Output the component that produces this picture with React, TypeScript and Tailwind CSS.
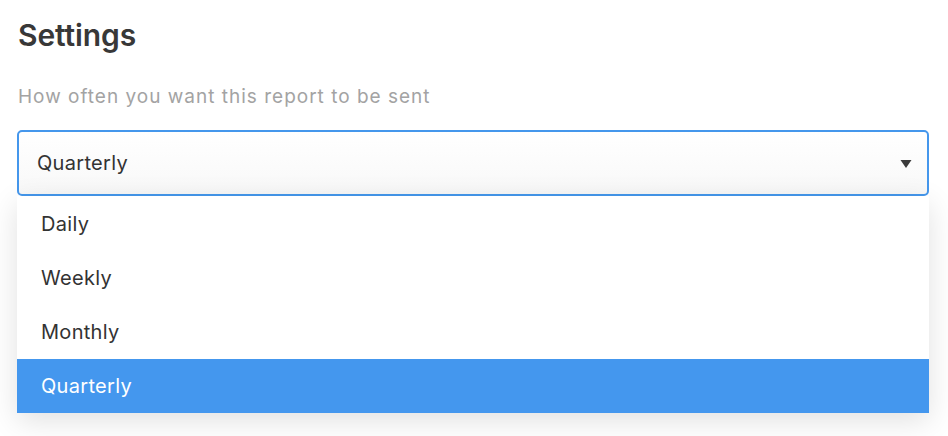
import React from "react";

const options = ["Daily", "Weekly", "Monthly", "Quarterly"];

export default function App() {
  const selected = "Quarterly";

  return (
    <div className="min-h-screen bg-white font-['Inter',sans-serif] px-[17px] pt-[17px]">
      <h1 className="text-[30px] leading-[36px] font-semibold text-[#383838] pl-px tracking-[-0.1px]">Settings</h1>

      <p className="mt-[32px] text-[19px] leading-[24px] tracking-[1px] text-[#a3a3a3] pl-px">
        How often you want this report to be sent
      </p>

      <div className="relative mt-[21px] w-[912px]">
        <div className="flex h-[66px] items-center justify-between rounded-[5px] border-2 border-[#4597ec] bg-gradient-to-b from-white to-[#f8f8f8] pl-[18px] pr-[15px]">
          <span className="text-[20px] tracking-[0.3px] text-[#333333]">{selected}</span>
          <svg width="12" height="10" viewBox="0 0 12 10" className="mt-px">
            <path d="M0.5 1 H11.5 L6 9 Z" fill="#3a3a3a" />
          </svg>
        </div>

        <ul className="bg-white shadow-[0_8px_28px_rgba(0,0,0,0.12)] pt-px">
          {options.map((o) => (
            <li
              key={o}
              className={`flex h-[54px] items-center pl-[24px] text-[20px] tracking-[0.3px] ${
                o === selected ? "bg-[#4497ee] text-white" : "text-[#333333]"
              }`}
            >
              {o}
            </li>
          ))}
        </ul>
      </div>
    </div>
  );
}
